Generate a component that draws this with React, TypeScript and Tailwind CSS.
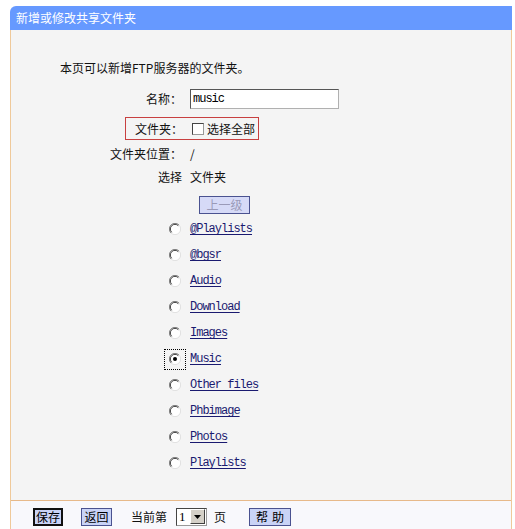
import React from 'react';

const folders = ['@Playlists', '@bgsr', 'Audio', 'Download', 'Images', 'Music', 'Other files', 'Phbimage', 'Photos', 'Playlists'];

const cjk = "font-['SimSun','Noto_Sans_CJK_SC',sans-serif]";
const mono = "font-['Liberation_Mono','Noto_Sans_CJK_SC',monospace]";

function Radio({ checked }: { checked?: boolean }) {
  return (
    <svg width="12" height="12" viewBox="0 0 12 12">
      <circle cx="6" cy="6" r="5.5" fill="#fff" />
      <path d="M10 2 A5.5 5.5 0 0 0 2 10" fill="none" stroke="#808080" strokeWidth="1" />
      <path d="M9.3 2.7 A4.5 4.5 0 0 0 2.7 9.3" fill="none" stroke="#404040" strokeWidth="1" />
      <path d="M2 10 A5.5 5.5 0 0 0 10 2" fill="none" stroke="#e0e0e0" strokeWidth="1" />
      {checked && <circle cx="6" cy="6" r="2" fill="#000" />}
    </svg>
  );
}

export default function App() {
  return (
    <div className={`w-[515px] h-[529px] bg-white overflow-hidden text-[12px] text-[#111] ${cjk}`}>
      <div className="ml-[10px] pt-[6px] w-[502px] h-full flex flex-col">
        <div className="h-[24px] rounded-tl-[6px] bg-[#6699ff] text-white flex items-center pl-[6px] shrink-0">
          新增或修改共享文件夹
        </div>
        <div className="flex-1 flex flex-col bg-[#f4f4f4] border-l border-r border-[#efc99a]">
          <div className="flex-1 flex flex-col">
            <div className="h-[16px] mt-[30px] pl-[49px] leading-[16px]">本页可以新增FTP服务器的文件夹。</div>

            <div className="grid grid-cols-[171px_1fr] gap-x-[8px] items-center h-[20px] mt-[13px]">
              <div className="text-right">名称：</div>
              <div className="h-[20px] w-[149px] bg-white border border-[#b0b0b0] border-t-[#555] border-l-[#555] flex items-center pl-[2px]">
                <span className={`${mono} text-[12px] tracking-[-1px] text-black`}>music</span>
              </div>
            </div>

            <div className="h-[23px] mt-[8px] ml-[114px] w-[134px] border border-[#c84040] flex items-center pl-[9px]">
              <span>文件夹：</span>
              <span className="ml-[9px] w-[12px] h-[12px] bg-white border border-[#999] border-t-[#444] border-l-[#444] inline-block" />
              <span className="ml-[3px]">选择全部</span>
            </div>

            <div className="grid grid-cols-[171px_1fr] gap-x-[8px] items-center h-[16px] mt-[5px]">
              <div className="text-right">文件夹位置：</div>
              <div>/</div>
            </div>

            <div className="grid grid-cols-[171px_1fr] gap-x-[8px] items-center h-[16px] mt-[7px]">
              <div className="text-right">选择</div>
              <div>文件夹</div>
            </div>

            <div className="mt-[12px] ml-[188px]">
              <div className="w-[51px] h-[18px] bg-[#d6daf7] border border-[#4a5290] text-[#9a9ab8] flex items-center justify-center">
                上一级
              </div>
            </div>

            <div className="mt-[2px] flex flex-col">
              {folders.map((name) => (
                <div key={name} className="h-[26px] grid grid-cols-[171px_1fr] gap-x-[8px] items-center">
                  <div className="flex justify-end pr-[1px]">
                    {name === 'Music' ? (
                      <div className="w-[22px] h-[21px] border border-dotted border-black flex items-center justify-center -mr-[5px]">
                        <Radio checked />
                      </div>
                    ) : (
                      <Radio />
                    )}
                  </div>
                  <a className={`${mono} text-[12px] tracking-[-1px] text-[#1a1a70] underline underline-offset-[2px] w-fit cursor-pointer`}>
                    {name}
                  </a>
                </div>
              ))}
            </div>
          </div>

          <div className="h-[29px] shrink-0 border-t border-[#e7b98a] bg-[#f8f8fc] flex items-center pl-[22px] pt-[3px]">
            <div className="w-[30px] h-[18px] bg-[#c9d3f6] border-2 border-[#111] flex items-center justify-center text-black">保存</div>
            <div className="ml-[18px] w-[31px] h-[18px] bg-[#c9d3f6] border border-[#4a5290] flex items-center justify-center text-black">返回</div>
            <div className="ml-[19px]">当前第</div>
            <div className="ml-[9px] w-[31px] h-[18px] bg-white border border-[#999] border-t-[#444] border-l-[#444] flex items-center">
              <span className="flex-1 pl-[2px] font-['Liberation_Serif',serif] text-[13px] text-black">1</span>
              <span className="w-[15px] h-[15px] bg-[#d4d0c8] border border-[#fff] border-r-[#404040] border-b-[#404040] flex items-center justify-center mr-[1px]">
                <svg width="7" height="4" viewBox="0 0 7 4"><path d="M0 0h7L3.5 4z" fill="#000" /></svg>
              </span>
            </div>
            <div className="ml-[7px]">页</div>
            <div className="ml-[23px] w-[42px] h-[18px] bg-[#c9d3f6] border border-[#4a5290] flex items-center justify-center text-black tracking-[4px] pl-[4px]">帮助</div>
          </div>
        </div>
      </div>
    </div>
  );
}
